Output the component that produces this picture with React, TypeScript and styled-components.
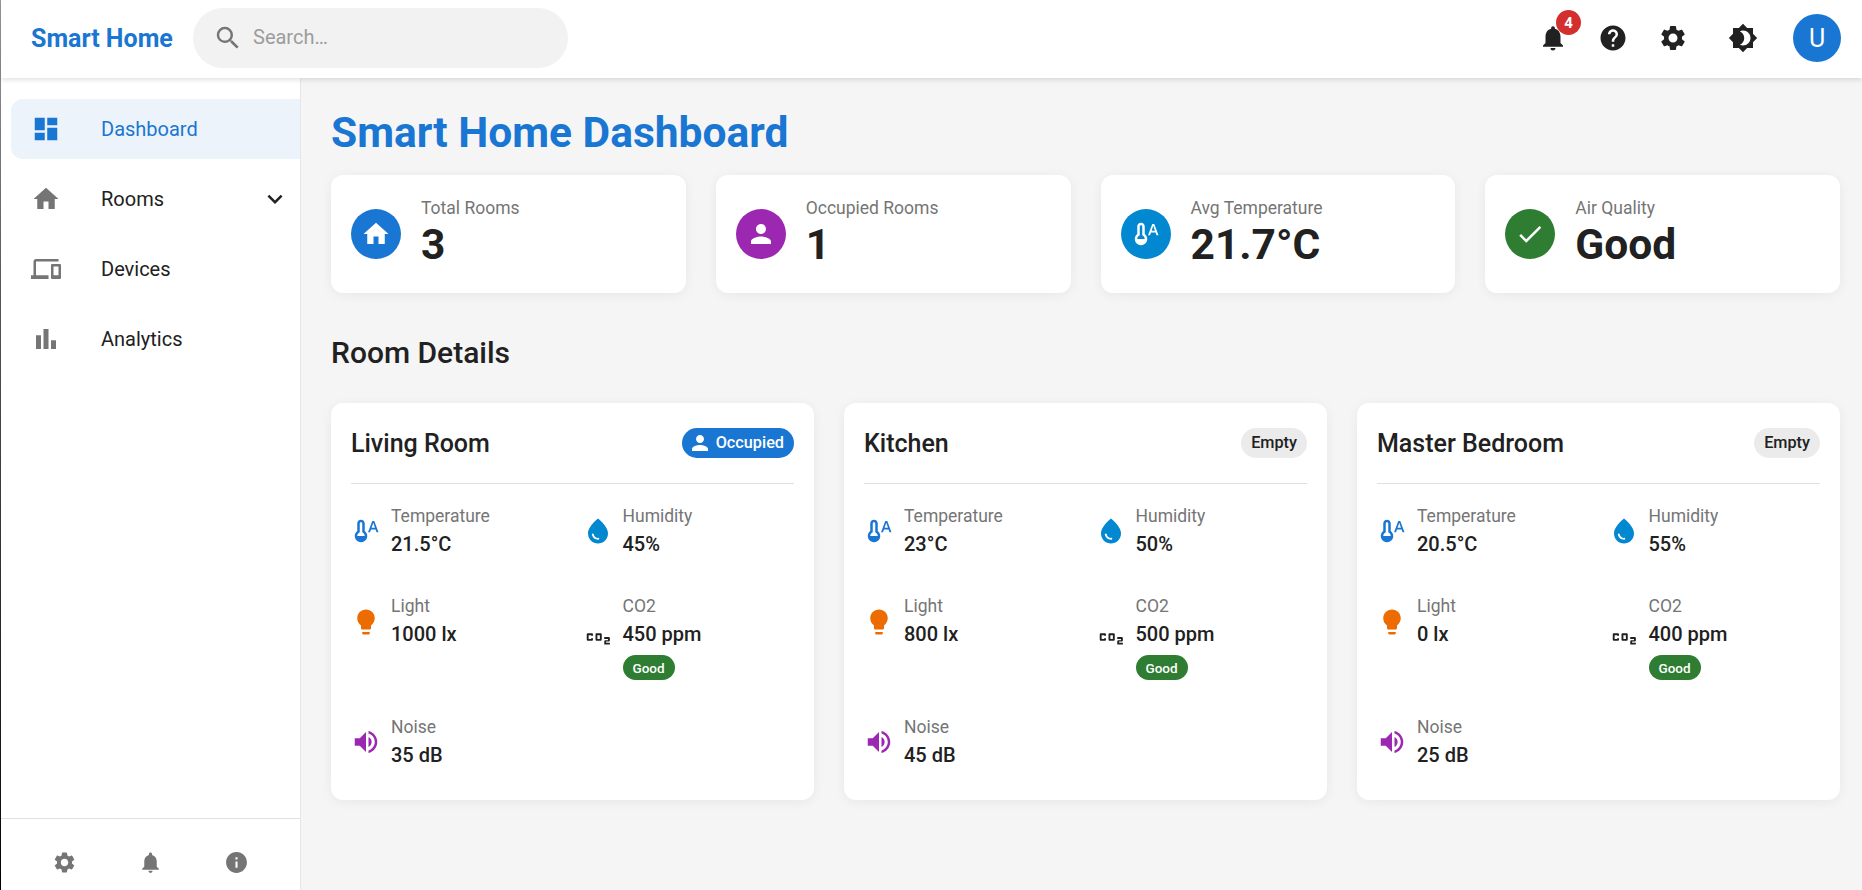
import React from 'react';
import styled, { createGlobalStyle } from 'styled-components';
import {
  MdDashboard, MdHome, MdExpandMore, MdDevices, MdBarChart, MdSearch, MdNotifications,
  MdHelp, MdSettings, MdBrightness4, MdPerson, MdCheck, MdThermostatAuto, MdWaterDrop,
  MdLightbulb, MdCo2, MdVolumeUp, MdInfo,
} from 'react-icons/md';

const Global = createGlobalStyle`
  html, body { margin: 0; padding: 0; height: 100%; background: #f5f5f5; }
  body { font-family: Roboto, "Liberation Sans", sans-serif; color: #212121; overflow: hidden; }
  * { box-sizing: border-box; }
`;

const primary = '#1976d2';
const muted = '#757575';

const Page = styled.div`
  height: 890px;
  padding-left: 1px;
  background: linear-gradient(#9a9a9a 0, #555 300px, #111 800px, #000 100%);
  display: flex;
  flex-direction: column;
`;
const Header = styled.header`
  position: relative;
  z-index: 2;
  height: 78px;
  flex: none;
  background: #fff;
  display: flex;
  align-items: center;
  padding: 0 0 2px 30px;
  box-shadow: 0 2px 5px rgba(0, 0, 0, 0.12);
`;
const Logo = styled.div`
  font-size: 25px;
  font-weight: 700;
  color: ${primary};
  width: 162px;
  white-space: nowrap;
`;
const Search = styled.div`
  width: 375px;
  height: 60px;
  border-radius: 30px;
  background: #f2f2f2;
  display: flex;
  align-items: center;
  padding-left: 20px;
  color: ${muted};
  font-size: 30px;
`;
const SearchText = styled.span`
  font-size: 20px;
  color: #9c9c9c;
  margin-left: 10px;
  margin-top: -3px;
`;
const HeaderRight = styled.div`
  margin-left: auto;
  display: flex;
  align-items: center;
  padding-right: 21px;
`;
const IconSlot = styled.div<{ $w: number; $ml?: number }>`
  position: relative;
  width: ${(p) => p.$w}px;
  margin-left: ${(p) => p.$ml ?? 0}px;
  height: 30px;
  display: flex;
  align-items: center;
  justify-content: center;
  font-size: 30px;
  color: #212121;
`;
const Badge = styled.span`
  position: absolute;
  top: -13px;
  left: 33px;
  width: 25px;
  height: 25px;
  border-radius: 50%;
  background: #d32f2f;
  color: #fff;
  font-size: 15px;
  font-weight: 700;
  display: flex;
  align-items: center;
  justify-content: center;
`;
const Avatar = styled.div`
  width: 48px;
  height: 48px;
  margin-left: 35px;
  border-radius: 50%;
  background: ${primary};
  color: #fff;
  font-size: 25px;
  display: flex;
  align-items: center;
  justify-content: center;
`;
const Body = styled.div`
  flex: 1;
  display: flex;
  min-height: 0;
`;
const Sidebar = styled.aside`
  width: 300px;
  flex: none;
  background: #fff;
  border-right: 1px solid #e6e6e6;
  display: flex;
  flex-direction: column;
  padding-top: 21px;
`;
const NavItem = styled.div<{ $active?: boolean }>`
  height: 60px;
  margin: 0 0 10px 10px;
  padding: 0 10px 0 20px;
  border-radius: 12px 0 0 12px;
  display: flex;
  align-items: center;
  font-size: 20px;
  background: ${(p) => (p.$active ? '#edf3fb' : 'transparent')};
  color: ${(p) => (p.$active ? primary : '#212121')};
`;
const NavIcon = styled.span<{ $active?: boolean }>`
  width: 70px;
  flex: none;
  display: flex;
  font-size: 30px;
  color: ${(p) => (p.$active ? primary : muted)};
`;
const Chevron = styled.span`
  margin-left: auto;
  display: flex;
  font-size: 30px;
  color: #212121;
`;
const SideFooter = styled.div`
  margin-top: auto;
  height: 72px;
  border-top: 1px solid #e0e0e0;
  display: flex;
  justify-content: center;
  align-items: center;
  gap: 61px;
  font-size: 25px;
  color: ${muted};
  padding-top: 15px;
  svg { display: block; }
`;
const Main = styled.main`
  flex: 1;
  background: #f5f5f5;
  padding: 29px 22px 0 30px;
  min-width: 0;
`;
const Title = styled.h1`
  margin: 0 0 15.5px;
  font-size: 42.5px;
  line-height: 1.235;
  font-weight: 700;
  color: ${primary};
`;
const StatGrid = styled.div`
  display: grid;
  grid-template-columns: repeat(4, 1fr);
  gap: 30px;
`;
const Card = styled.div`
  background: #fff;
  border-radius: 12px;
  box-shadow: 0 2px 12px rgba(0, 0, 0, 0.06);
`;
const StatCard = styled(Card)`
  padding: 20px;
  display: flex;
  align-items: center;
  gap: 20px;
`;
const StatIcon = styled.div<{ $c: string }>`
  width: 50px;
  height: 50px;
  border-radius: 50%;
  background: ${(p) => p.$c};
  color: #fff;
  font-size: 30px;
  display: flex;
  align-items: center;
  justify-content: center;
`;
const StatLabel = styled.div`
  font-size: 17.5px;
  line-height: 1.5;
  color: ${muted};
`;
const StatValue = styled.div`
  margin: -2px 0 1px;
  font-size: 42.5px;
  line-height: 1.235;
  font-weight: 700;
`;
const Section = styled.h2`
  margin: 40px 0 30px;
  font-size: 30px;
  line-height: 1.334;
  font-weight: 500;
`;
const RoomGrid = styled.div`
  display: grid;
  grid-template-columns: repeat(3, 1fr);
  gap: 30px;
`;
const RoomCard = styled(Card)`
  padding: 20px 20px 29.5px;
`;
const RoomHead = styled.div`
  display: flex;
  align-items: center;
  justify-content: space-between;
  padding-bottom: 20px;
  border-bottom: 1px solid #e0e0e0;
  margin-bottom: 19.5px;
`;
const RoomName = styled.div`
  margin: 1px 0 -1px;
  font-size: 25px;
  line-height: 1.6;
  font-weight: 500;
`;
const Chip = styled.span<{ $on?: boolean }>`
  height: 30px;
  padding: 0 10px 0 ${(p) => (p.$on ? '5.5px' : '10px')};
  border-radius: 15px;
  display: inline-flex;
  align-items: center;
  gap: 4px;
  font-size: 16.25px;
  font-weight: 500;
  background: ${(p) => (p.$on ? primary : '#ebebeb')};
  color: ${(p) => (p.$on ? '#fff' : '#212121')};
`;
const Metrics = styled.div`
  display: grid;
  grid-template-columns: 1fr 1fr;
  column-gap: 20px;
  row-gap: 34px;
  align-items: start;
`;
const Metric = styled.div`
  display: flex;
  align-items: center;
  gap: 10px;
`;
const MetricIcon = styled.span<{ $c: string }>`
  width: 30px;
  flex: none;
  display: flex;
  justify-content: center;
  font-size: 30px;
  color: ${(p) => p.$c};
`;
const MetricLabel = styled.div`
  font-size: 17.5px;
  line-height: 1.5;
  color: ${muted};
`;
const MetricValue = styled.div`
  margin: -0.5px 0 0.5px;
  font-size: 20px;
  line-height: 1.5;
  font-weight: 500;
`;
const GoodChip = styled.span`
  height: 25px;
  margin-top: 6px;
  padding: 0 10px;
  border-radius: 13px;
  display: flex;
  width: fit-content;
  align-items: center;
  background: #2e7d32;
  color: #fff;
  font-size: 13.5px;
  font-weight: 500;
`;

const stats = [
  { label: 'Total Rooms', value: '3', c: primary, icon: <MdHome /> },
  { label: 'Occupied Rooms', value: '1', c: '#9c27b0', icon: <MdPerson /> },
  { label: 'Avg Temperature', value: '21.7°C', c: '#0288d1', icon: <MdThermostatAuto /> },
  { label: 'Air Quality', value: 'Good', c: '#2e7d32', icon: <MdCheck /> },
];
const rooms = [
  { name: 'Living Room', on: true, t: '21.5°C', h: '45%', l: '1000 lx', co: '450 ppm', n: '35 dB' },
  { name: 'Kitchen', on: false, t: '23°C', h: '50%', l: '800 lx', co: '500 ppm', n: '45 dB' },
  { name: 'Master Bedroom', on: false, t: '20.5°C', h: '55%', l: '0 lx', co: '400 ppm', n: '25 dB' },
];

function Reading(props: { icon: React.ReactNode; c: string; label: string; value: string; good?: boolean }) {
  return (
    <Metric>
      <MetricIcon $c={props.c}>{props.icon}</MetricIcon>
      <div>
        <MetricLabel>{props.label}</MetricLabel>
        <MetricValue>{props.value}</MetricValue>
        {props.good && <GoodChip>Good</GoodChip>}
      </div>
    </Metric>
  );
}

export default function App() {
  return (
    <Page>
      <Global />
      <Header>
        <Logo>Smart Home</Logo>
        <Search>
          <MdSearch />
          <SearchText>Search…</SearchText>
        </Search>
        <HeaderRight>
          <IconSlot $w={60}>
            <MdNotifications />
            <Badge>4</Badge>
          </IconSlot>
          <IconSlot $w={60}><MdHelp /></IconSlot>
          <IconSlot $w={60}><MdSettings /></IconSlot>
          <IconSlot $w={30} $ml={25}><MdBrightness4 /></IconSlot>
          <Avatar>U</Avatar>
        </HeaderRight>
      </Header>
      <Body>
        <Sidebar>
          <NavItem $active><NavIcon $active><MdDashboard /></NavIcon>Dashboard</NavItem>
          <NavItem><NavIcon><MdHome /></NavIcon>Rooms<Chevron><MdExpandMore /></Chevron></NavItem>
          <NavItem><NavIcon><MdDevices /></NavIcon>Devices</NavItem>
          <NavItem><NavIcon><MdBarChart /></NavIcon>Analytics</NavItem>
          <SideFooter>
            <MdSettings />
            <MdNotifications />
            <MdInfo />
          </SideFooter>
        </Sidebar>
        <Main>
          <Title>Smart Home Dashboard</Title>
          <StatGrid>
            {stats.map((s) => (
              <StatCard key={s.label}>
                <StatIcon $c={s.c}>{s.icon}</StatIcon>
                <div>
                  <StatLabel>{s.label}</StatLabel>
                  <StatValue>{s.value}</StatValue>
                </div>
              </StatCard>
            ))}
          </StatGrid>
          <Section>Room Details</Section>
          <RoomGrid>
            {rooms.map((r) => (
              <RoomCard key={r.name}>
                <RoomHead>
                  <RoomName>{r.name}</RoomName>
                  {r.on ? <Chip $on><MdPerson size={24} />Occupied</Chip> : <Chip>Empty</Chip>}
                </RoomHead>
                <Metrics>
                  <Reading icon={<MdThermostatAuto />} c={primary} label="Temperature" value={r.t} />
                  <Reading icon={<MdWaterDrop />} c="#0288d1" label="Humidity" value={r.h} />
                  <Reading icon={<MdLightbulb />} c="#ed6c02" label="Light" value={r.l} />
                  <Reading icon={<MdCo2 />} c="#212121" label="CO2" value={r.co} good />
                  <Reading icon={<MdVolumeUp />} c="#9c27b0" label="Noise" value={r.n} />
                </Metrics>
              </RoomCard>
            ))}
          </RoomGrid>
        </Main>
      </Body>
    </Page>
  );
}
